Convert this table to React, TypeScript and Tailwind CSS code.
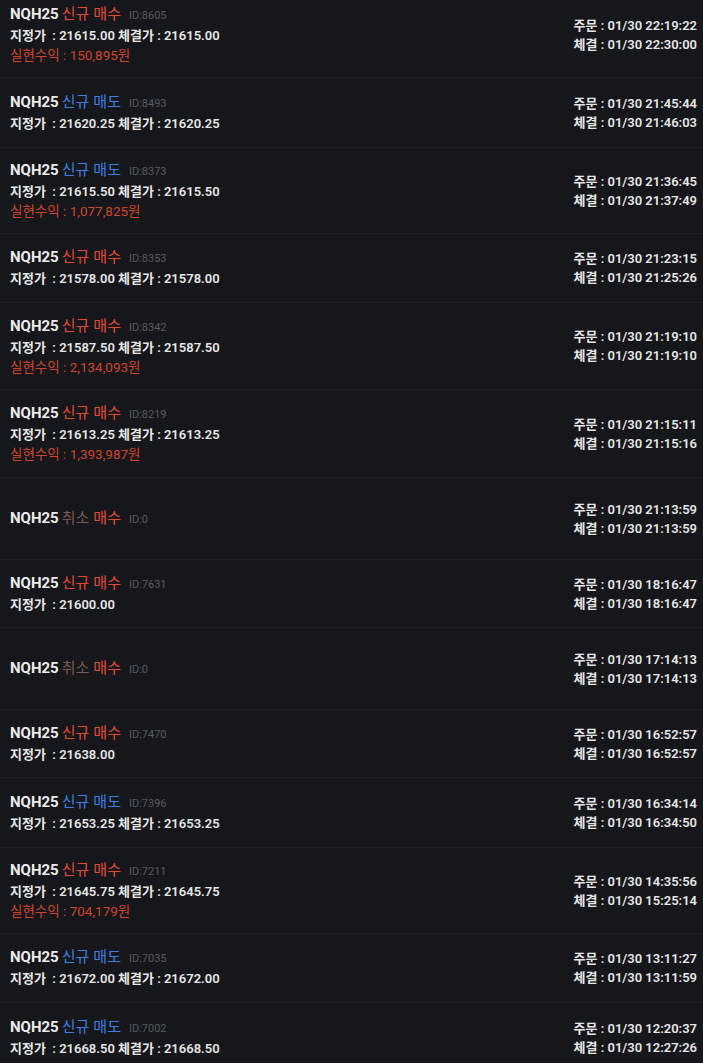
type Row = {
  side: 'buy' | 'sell';
  cancel?: boolean;
  id: string;
  limit?: string;
  fill?: string;
  pnl?: string;
  order: string;
  exec: string;
  h: string;
};

const rows: Row[] = [
  { side: 'buy', id: '8605', limit: '21615.00', fill: '21615.00', pnl: '150,895', order: '01/30 22:19:22', exec: '01/30 22:30:00', h: 'h-[86px] -mt-[8px]' },
  { side: 'sell', id: '8493', limit: '21620.25', fill: '21620.25', order: '01/30 21:45:44', exec: '01/30 21:46:03', h: 'h-[70px]' },
  { side: 'sell', id: '8373', limit: '21615.50', fill: '21615.50', pnl: '1,077,825', order: '01/30 21:36:45', exec: '01/30 21:37:49', h: 'h-[86px]' },
  { side: 'buy', id: '8353', limit: '21578.00', fill: '21578.00', order: '01/30 21:23:15', exec: '01/30 21:25:26', h: 'h-[69px]' },
  { side: 'buy', id: '8342', limit: '21587.50', fill: '21587.50', pnl: '2,134,093', order: '01/30 21:19:10', exec: '01/30 21:19:10', h: 'h-[87px]' },
  { side: 'buy', id: '8219', limit: '21613.25', fill: '21613.25', pnl: '1,393,987', order: '01/30 21:15:11', exec: '01/30 21:15:16', h: 'h-[88px]' },
  { side: 'buy', cancel: true, id: '0', order: '01/30 21:13:59', exec: '01/30 21:13:59', h: 'h-[82px]' },
  { side: 'buy', id: '7631', limit: '21600.00', order: '01/30 18:16:47', exec: '01/30 18:16:47', h: 'h-[68px]' },
  { side: 'buy', cancel: true, id: '0', order: '01/30 17:14:13', exec: '01/30 17:14:13', h: 'h-[82px]' },
  { side: 'buy', id: '7470', limit: '21638.00', order: '01/30 16:52:57', exec: '01/30 16:52:57', h: 'h-[68px]' },
  { side: 'sell', id: '7396', limit: '21653.25', fill: '21653.25', order: '01/30 16:34:14', exec: '01/30 16:34:50', h: 'h-[70px]' },
  { side: 'buy', id: '7211', limit: '21645.75', fill: '21645.75', pnl: '704,179', order: '01/30 14:35:56', exec: '01/30 15:25:14', h: 'h-[86px]' },
  { side: 'sell', id: '7035', limit: '21672.00', fill: '21672.00', order: '01/30 13:11:27', exec: '01/30 13:11:59', h: 'h-[69px]' },
  { side: 'sell', id: '7002', limit: '21668.50', fill: '21668.50', order: '01/30 12:20:37', exec: '01/30 12:27:26', h: 'h-[70px]' },
];

function TradeRow({ r }: { r: Row }) {
  const sideColor = r.side === 'buy' ? 'text-[#e24a35]' : 'text-[#3f7fe0]';
  return (
    <div className={`${r.h} flex items-center justify-between border-b border-[#1d1e23] pl-[10px] pr-[6px]`}>
      <div className="flex flex-col">
        <div className="flex items-baseline leading-[20px]">
          <span className="text-[15px] font-bold text-[#ececec]">NQH25</span>
          {r.cancel ? (
            <span className="ml-[3px] text-[15px] text-[#7a5a50]">취소</span>
          ) : (
            <span className={`ml-[3px] text-[15px] ${sideColor}`}>신규</span>
          )}
          <span className={`ml-[4px] text-[15px] ${sideColor}`}>{r.side === 'buy' ? '매수' : '매도'}</span>
          <span className="ml-[8px] text-[11px] text-[#575a61]">ID:{r.id}</span>
        </div>
        {r.limit && (
          <div className="text-[13px] font-semibold leading-[20px] text-[#e6e6e6]">
            지정가 &nbsp;: {r.limit}
            {r.fill && <> 체결가 : {r.fill}</>}
          </div>
        )}
        {r.pnl && (
          <div className="text-[13.5px] leading-[19px] text-[#cf4630]">실현수익 : {r.pnl}원</div>
        )}
      </div>
      <div className="flex flex-col items-end text-[13px] font-semibold leading-[19px] text-[#e6e6e6]">
        <div>주문 : {r.order}</div>
        <div>체결 : {r.exec}</div>
      </div>
    </div>
  );
}

export default function App() {
  return (
    <div className="h-[1063px] w-full overflow-hidden bg-[#16171b] font-['Roboto','Noto_Sans_CJK_KR',sans-serif]">
      {rows.map((r, i) => (
        <TradeRow key={i} r={r} />
      ))}
    </div>
  );
}
